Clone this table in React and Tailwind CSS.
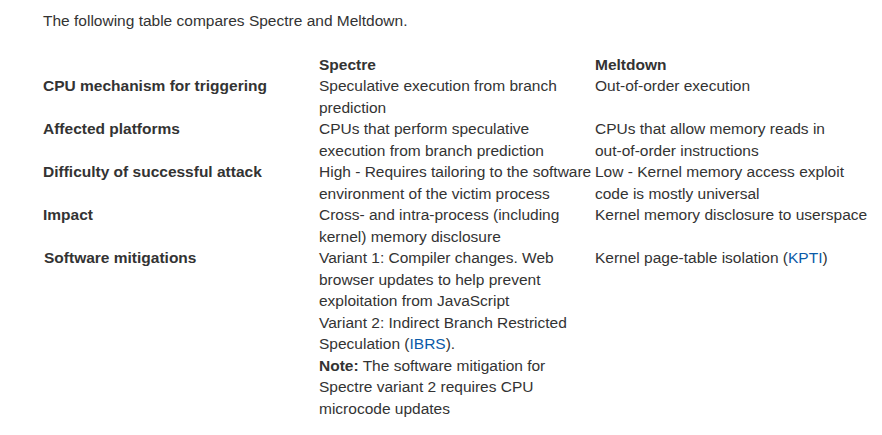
export default function App() {
  const rows = [
    {
      label: 'CPU mechanism for triggering',
      spectre: 'Speculative execution from branch prediction',
      meltdown: 'Out-of-order execution',
    },
    {
      label: 'Affected platforms',
      spectre: 'CPUs that perform speculative execution from branch prediction',
      meltdown: (
        <>
          CPUs that allow memory reads in <span className="whitespace-nowrap">out-of-order</span> instructions
        </>
      ),
    },
    {
      label: 'Difficulty of successful attack',
      spectre: 'High - Requires tailoring to the software environment of the victim process',
      meltdown: 'Low - Kernel memory access exploit code is mostly universal',
    },
    {
      label: 'Impact',
      spectre: 'Cross- and intra-process (including kernel) memory disclosure',
      meltdown: 'Kernel memory disclosure to userspace',
    },
  ];

  return (
    <div className="min-h-screen bg-white pl-[43px] pt-[10px] font-['Liberation_Sans',Arial,sans-serif] text-[15.5px] leading-[21.5px] text-[#333]">
      <p className="mb-[22px]">The following table compares Spectre and Meltdown.</p>

      <div className="grid grid-cols-[276px_276px_280px]">
        <div></div>
        <div className="font-bold">Spectre</div>
        <div className="font-bold">Meltdown</div>

        {rows.map((row) => (
          <div key={row.label} className="contents">
            <div className="font-bold">{row.label}</div>
            <div>{row.spectre}</div>
            <div>{row.meltdown}</div>
          </div>
        ))}

        <div className="pl-px font-bold">Software mitigations</div>
        <div className="pr-[20px]">
          <div>Variant 1: Compiler changes. Web browser updates to help prevent exploitation from JavaScript</div>
          <div>
            Variant 2: Indirect Branch Restricted Speculation (<span className="text-[#0b5aa8]">IBRS</span>).
          </div>
          <div>
            <span className="font-bold">Note:</span> The software mitigation for Spectre variant 2 requires CPU microcode updates
          </div>
        </div>
        <div>
          Kernel page-table isolation (<span className="text-[#0b5aa8]">KPTI</span>)
        </div>
      </div>
    </div>
  );
}
